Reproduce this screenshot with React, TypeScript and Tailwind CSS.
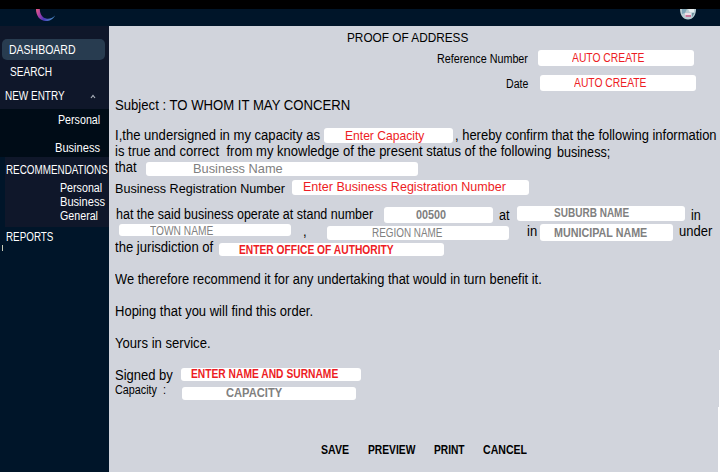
import type { ReactNode } from "react";

interface BoxProps {
  className?: string;
  children: ReactNode;
}

// Small captions and field values: condensed, on a 16px line.
function Label({ className = "", children }: BoxProps) {
  return (
    <span className={`block h-4 shrink-0 origin-left whitespace-pre leading-4 ${className}`}>
      {children}
    </span>
  );
}

// Running text of the letter.
function Body({ className = "scale-x-[0.929]", children }: BoxProps) {
  return (
    <span className={`block h-4 shrink-0 origin-left whitespace-pre text-[14px] leading-[14px] ${className}`}>
      {children}
    </span>
  );
}

function Field({ className = "", children }: BoxProps) {
  return (
    <div className={`flex shrink-0 items-start rounded-[3px] bg-white ${className}`}>{children}</div>
  );
}

function Row({ className = "", children }: BoxProps) {
  return <div className={`flex shrink-0 items-start ${className}`}>{children}</div>;
}

function Header() {
  return (
    <header className="flex h-[26px] shrink-0 items-start border-t-[9px] border-black bg-[#001529]">
      <svg className="ml-[35px]" width="22" height="14" viewBox="0 0 22 14">
        <defs>
          <linearGradient id="logo" x1="0" y1="0" x2="1" y2="0.3">
            <stop offset="0" stopColor="#f0607c" />
            <stop offset="0.3" stopColor="#a63ca8" />
            <stop offset="0.6" stopColor="#4a36b8" />
            <stop offset="1" stopColor="#4b86c8" />
          </linearGradient>
        </defs>
        <path
          d="M1 0 C1 7 5 12 11 12 C15 12 18.500 10 20 6.500 C17.500 9 15 10 12 9.700 C7.500 9.300 4.800 5 4.800 0 Z"
          fill="url(#logo)"
        />
      </svg>
      <svg className="ml-[622px]" width="18" height="11" viewBox="0 0 18 11">
        <path d="M1 0 H17 C17 6 14 10.500 9 10.500 C4 10.500 1 6 1 0 Z" fill="#b9cdd3" />
        <path d="M3 0 H8 L6 4 L3 5 Z" fill="#7fa6b8" />
        <path d="M9 0 H15 V3 L11 3.500 Z" fill="#e6eef0" />
        <path d="M6 4 H12 V8 H6 Z" fill="#efdfe6" />
        <path d="M6.500 6 H12 V8 H6.500 Z" fill="#c8779a" />
        <path d="M13 4 H15.500 L13 8 Z" fill="#6f8f9d" />
      </svg>
    </header>
  );
}

function Sidebar() {
  return (
    <nav className="flex w-[109px] shrink-0 flex-col bg-[#001529] text-[12px] text-white">
      <div className="h-[83px] shrink-0 bg-[#0f172a] pt-[13px]">
        <div className="ml-[2px] h-[21px] w-[103px] rounded-[5px] bg-[#283c50] pl-[7px] pt-[3px]">
          <Label className="scale-x-[0.875]">DASHBOARD</Label>
        </div>
        <Label className="ml-[10px] mt-1 scale-x-[0.84]">SEARCH</Label>
        <div className="mt-2 flex">
          <Label className="ml-[5px] w-[85px] scale-x-[0.83]">NEW ENTRY</Label>
          <svg className="mt-[6px]" width="6" height="5" viewBox="0 0 6 5">
            <path d="M1 4 L3 1.500 L5 4" fill="none" stroke="#a9b0ba" strokeWidth="1.2" />
          </svg>
        </div>
      </div>
      <div className="h-12 shrink-0 bg-[#000c17] pt-[3px]">
        <Label className="ml-[58px] scale-x-[0.89]">Personal</Label>
        <Label className="ml-[55px] mt-3 scale-x-[0.924]">Business</Label>
      </div>
      <div className="ml-[5px] h-[70px] shrink-0 bg-[#0f172a] pt-[5px]">
        <Label className="ml-px w-[103px] scale-x-[0.822]">RECOMMENDATIONS</Label>
        <div className="ml-[55px] mt-[2px] flex h-[42px] flex-col items-start">
          <Label className="-mb-[2px] scale-x-[0.89]">Personal</Label>
          <Label className="-mb-[2px] scale-x-[0.924]">Business</Label>
          <Label className="scale-x-[0.89]">General</Label>
        </div>
      </div>
      <Label className="ml-[6px] mt-[2px] scale-x-[0.82]">REPORTS</Label>
      <div className="ml-[2px] h-[6px] w-px bg-[#c9cdb8]" />
    </nav>
  );
}

function Letter() {
  return (
    <main className="flex min-w-0 flex-1 flex-col bg-[#d1d4dc] pl-[6px] text-[12px] text-black">
      <Row className="mt-1 h-[19px]">
        <Label className="ml-[232px] scale-x-[0.908] text-[13px]">PROOF OF ADDRESS</Label>
      </Row>
      <Row className="h-[25px]">
        <Label className="ml-[322px] mt-[2px] w-[101px] scale-x-[0.897]">Reference Number</Label>
        <Field className="mt-[1px] h-[16px] w-[156px] pl-[34px] text-[#ed1c24]">
          <Label className="scale-x-[0.86]">AUTO CREATE</Label>
        </Field>
      </Row>
      <Row className="h-6">
        <Label className="ml-[391px] mt-[2px] w-[34px] scale-x-[0.88]">Date</Label>
        <Field className="mt-[1px] h-[16px] w-[156px] pl-[34px] text-[#ed1c24]">
          <Label className="scale-x-[0.86]">AUTO CREATE</Label>
        </Field>
      </Row>
      <Row className="h-[30px]">
        <Body className="scale-x-[0.938]">Subject : TO WHOM IT MAY CONCERN</Body>
      </Row>
      <Row className="h-4">
        <Body className="w-[209px] scale-x-[0.934]">I,the undersigned in my capacity as</Body>
        <Field className="h-[15px] w-[129px] pl-[21px] text-[13px] text-[#ed1c24]">
          <Label className="scale-x-[0.93]">Enter Capacity</Label>
        </Field>
        <Body className="ml-[2px] scale-x-[0.926]">, hereby confirm that the following information</Body>
      </Row>
      <Row className="h-4">
        <Body className="w-[442px] scale-x-[0.93]">
          is true and correct  from my knowledge of the present status of the following
        </Body>
        <Body className="mt-px scale-x-[0.9]">business;</Body>
      </Row>
      <Row className="h-[20px]">
        <Body className="w-[31px] scale-x-[0.929]">that</Body>
        <Field className="mt-[2px] h-[14px] w-[272px] pl-[47px] text-[13px] text-[#808080]">
          <Label className="-mt-px scale-x-[0.985]">Business Name</Label>
        </Field>
      </Row>
      <Row className="h-[26px] text-[13px]">
        <Label className="mt-px w-[177px] scale-x-[0.968]">Business Registration Number</Label>
        <Field className="h-[15px] w-[237px] pl-[11px] text-[#ed1c24]">
          <Label className="-mt-px scale-x-[0.965]">Enter Business Registration Number</Label>
        </Field>
      </Row>
      <Row className="h-[18px]">
        <Body className="ml-px mt-px w-[268px] scale-x-[0.893]">hat the said business operate at stand number</Body>
        <Field className="mt-px h-[16px] w-[109px] pl-8 font-bold text-[#808080]">
          <Label className="scale-x-[0.9]">00500</Label>
        </Field>
        <Body className="ml-[6px] mt-[2px] w-[18px] scale-x-[0.9]">at</Body>
        <Field className="h-[15px] w-[168px] pl-[37px] font-bold text-[#808080]">
          <Label className="-mt-px scale-x-[0.835]">SUBURB NAME</Label>
        </Field>
        <Body className="ml-[6px] mt-[2px] scale-x-[0.9]">in</Body>
      </Row>
      <Row className="h-4">
        <Field className="ml-1 h-[12px] w-[172px] pl-[31px] text-[#808080]">
          <Label className="-mt-px scale-x-[0.85]">TOWN NAME</Label>
        </Field>
        <Body className="ml-3 w-6 scale-x-[0.929]">,</Body>
        <Field className="mt-[2px] h-[14px] w-[182px] pl-[45px] text-[#808080]">
          <Label className="-mt-px scale-x-[0.825]">REGION NAME</Label>
        </Field>
        <Body className="ml-[18px] w-[13px] scale-x-[0.929]">in</Body>
        <Field className="h-[17px] w-[133px] pl-[14px] font-bold text-[#808080]">
          <Label className="mt-px scale-x-[0.895]">MUNICIPAL NAME</Label>
        </Field>
        <Body className="ml-[6px] scale-x-[0.929]">under</Body>
      </Row>
      <Row className="h-8">
        <Body className="w-[104px] scale-x-[0.935]">the jurisdiction of</Body>
        <Field className="mt-[3px] h-[13px] w-[225px] pl-5 font-bold text-[#ed1c24]">
          <Label className="-mt-px scale-x-[0.855]">ENTER OFFICE OF AUTHORITY</Label>
        </Field>
      </Row>
      <Row className="h-8">
        <Body className="scale-x-[0.919]">
          We therefore recommend it for any undertaking that would in turn benefit it.
        </Body>
      </Row>
      <Row className="h-8">
        <Body>Hoping that you will find this order.</Body>
      </Row>
      <Row className="h-8">
        <Body className="scale-x-[0.935]">Yours in service.</Body>
      </Row>
      <Row className="h-[15px]">
        <Body className="w-[66px] scale-x-[0.929]">Signed by</Body>
        <Field className="h-[13px] w-[180px] pl-[10px] font-bold text-[#ed1c24]">
          <Label className="-mt-[2px] scale-x-[0.855]">ENTER NAME AND SURNAME</Label>
        </Field>
      </Row>
      <Row className="h-[59px]">
        <Label className="-mt-px w-[67px] scale-x-[0.9]">Capacity  :</Label>
        <Field className="mt-1 h-[13px] w-[174px] pl-11 font-bold text-[#808080]">
          <Label className="-mt-[2px] scale-x-[0.93]">CAPACITY</Label>
        </Field>
      </Row>
      <Row className="pl-[206px] font-bold">
        <Label className="w-[47px] scale-x-[0.88]">SAVE</Label>
        <Label className="w-[66px] scale-x-[0.855]">PREVIEW</Label>
        <Label className="w-[49px] scale-x-[0.85]">PRINT</Label>
        <Label className="scale-x-[0.88]">CANCEL</Label>
      </Row>
    </main>
  );
}

export default function App() {
  return (
    <div className="flex h-[472px] w-[720px] flex-col overflow-hidden font-['Liberation_Sans',Arial,sans-serif]">
      <Header />
      <div className="flex min-h-0 flex-1">
        <Sidebar />
        <Letter />
        <div className="flex w-[2px] shrink-0 flex-col items-end bg-[#d1d4dc] pt-[324px]">
          <div className="h-[57px] w-px bg-white" />
          <div className="w-[2px] flex-1 bg-white" />
        </div>
      </div>
    </div>
  );
}
